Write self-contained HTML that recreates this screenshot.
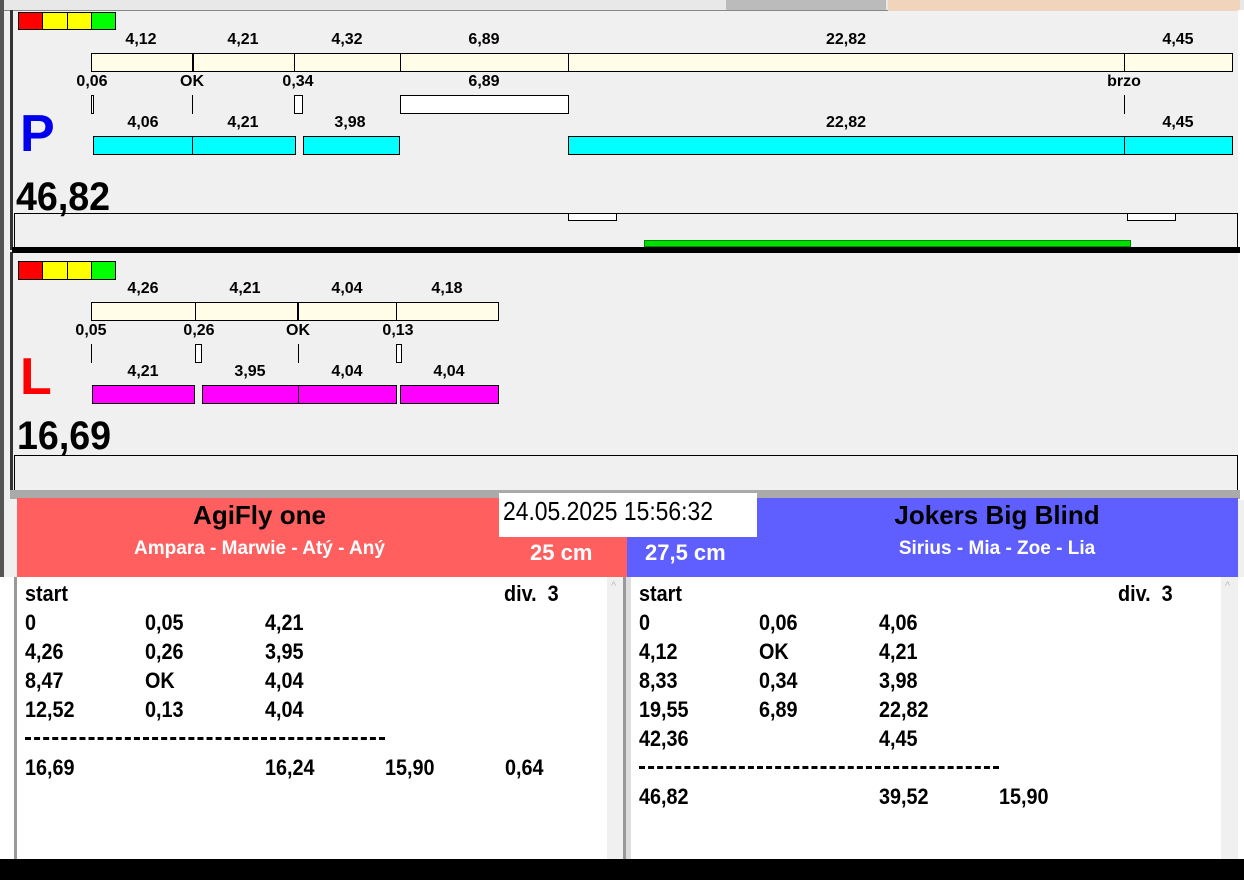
<!DOCTYPE html>
<html><head><meta charset="utf-8"><style>
*{margin:0;padding:0;box-sizing:border-box}
body{width:1244px;height:880px;overflow:hidden;background:#f0f0f0;position:relative;font-family:"Liberation Sans",Arial,sans-serif;font-weight:bold;color:#000}
div{position:absolute}
.b{border:1px solid #000}
.t{width:100px;text-align:center;font-size:16px;line-height:18px}
.cr{background:#fffde8}
.cy{background:#00ffff}
.mg{background:#ff00ff}
.w{background:#fff}
.vl{width:1px;background:#000}
.row{font-size:22px;line-height:29px;white-space:pre;transform:scaleX(.9);transform-origin:left}
</style></head><body>
<div style="left:0;top:0;width:1244px;height:11px;background:#e8e8e8;border-bottom:1px solid #888"></div>
<div style="left:726px;top:0;width:160px;height:10px;background:#bbb"></div>
<div style="left:888px;top:0;width:352px;height:11px;background:#f0d4bc"></div>
<div style="left:0;top:0;width:4px;height:580px;background:#555"></div>
<div style="left:10px;top:10px;width:3px;height:240px;background:#333"></div>
<div style="left:10px;top:252px;width:3px;height:240px;background:#333"></div>
<div style="left:1238px;top:10px;width:6px;height:490px;background:#fff"></div>

<div class="b" style="left:18px;top:12px;width:98px;height:18px;display:flex;position:absolute"><span style="flex:1;background:#f00;border-right:1px solid #000"></span><span style="flex:1;background:#ff0;border-right:1px solid #000"></span><span style="flex:1;background:#ff0;border-right:1px solid #000"></span><span style="flex:1;background:#0f0"></span></div>

<div class="t" style="left:91px;top:31px">4,12</div>
<div class="t" style="left:193px;top:31px">4,21</div>
<div class="t" style="left:297px;top:31px">4,32</div>
<div class="t" style="left:434px;top:31px">6,89</div>
<div class="t" style="left:796px;top:31px">22,82</div>
<div class="t" style="left:1128px;top:31px">4,45</div>
<div class="b cr" style="left:91px;top:53px;width:1142px;height:19px"></div>
<div class="vl" style="left:192px;top:53px;height:19px;width:2px"></div>
<div class="vl" style="left:294px;top:53px;height:19px"></div>
<div class="vl" style="left:400px;top:53px;height:19px"></div>
<div class="vl" style="left:568px;top:53px;height:19px"></div>
<div class="vl" style="left:1124px;top:53px;height:19px"></div>
<div class="t" style="left:42px;top:73px">0,06</div>
<div class="t" style="left:142px;top:73px">OK</div>
<div class="t" style="left:248px;top:73px">0,34</div>
<div class="t" style="left:434px;top:73px">6,89</div>
<div class="t" style="left:1074px;top:73px">brzo</div>
<div class="b w" style="left:91px;top:95px;width:3px;height:19px"></div>
<div class="vl" style="left:192px;top:95px;height:19px"></div>
<div class="b w" style="left:294px;top:95px;width:9px;height:19px"></div>
<div class="b w" style="left:400px;top:95px;width:169px;height:19px"></div>
<div class="vl" style="left:1124px;top:95px;height:19px"></div>
<div class="t" style="left:93px;top:114px">4,06</div>
<div class="t" style="left:193px;top:114px">4,21</div>
<div class="t" style="left:300px;top:114px">3,98</div>
<div class="t" style="left:796px;top:114px">22,82</div>
<div class="t" style="left:1128px;top:114px">4,45</div>
<div class="b cy" style="left:93px;top:136px;width:203px;height:19px"></div>
<div class="vl" style="left:192px;top:136px;height:19px"></div>
<div class="b cy" style="left:303px;top:136px;width:97px;height:19px"></div>
<div class="b cy" style="left:568px;top:136px;width:665px;height:19px"></div>
<div class="vl" style="left:1124px;top:136px;height:19px"></div>
<div style="left:20px;top:106px;font-size:52px;line-height:56px;color:#0000ee">P</div>
<div style="left:16px;top:175px;font-size:40px;line-height:44px;transform:scaleX(.94);transform-origin:left">46,82</div>
<div style="left:14px;top:213px;width:1224px;height:35px;border-top:1px solid #000;border-left:1px solid #000;border-right:1px solid #000"></div>
<div class="b w" style="left:568px;top:213px;width:49px;height:8px"></div>
<div class="b w" style="left:1127px;top:213px;width:49px;height:8px"></div>
<div style="left:644px;top:240px;width:487px;height:7px;background:#00e000;border:1px solid #080"></div>
<div style="left:12px;top:247px;width:1228px;height:6px;background:#000"></div>

<div class="b" style="left:18px;top:261px;width:98px;height:19px;display:flex;position:absolute"><span style="flex:1;background:#f00;border-right:1px solid #000"></span><span style="flex:1;background:#ff0;border-right:1px solid #000"></span><span style="flex:1;background:#ff0;border-right:1px solid #000"></span><span style="flex:1;background:#0f0"></span></div>
<div class="t" style="left:93px;top:280px">4,26</div>
<div class="t" style="left:195px;top:280px">4,21</div>
<div class="t" style="left:297px;top:280px">4,04</div>
<div class="t" style="left:397px;top:280px">4,18</div>
<div class="b cr" style="left:91px;top:302px;width:408px;height:19px"></div>
<div class="vl" style="left:195px;top:302px;height:19px"></div>
<div class="vl" style="left:297px;top:302px;height:19px;width:2px"></div>
<div class="vl" style="left:396px;top:302px;height:19px"></div>
<div class="t" style="left:41px;top:322px">0,05</div>
<div class="t" style="left:149px;top:322px">0,26</div>
<div class="t" style="left:248px;top:322px">OK</div>
<div class="t" style="left:348px;top:322px">0,13</div>
<div class="vl" style="left:91px;top:344px;height:19px"></div>
<div class="b w" style="left:195px;top:344px;width:7px;height:19px"></div>
<div class="vl" style="left:298px;top:344px;height:19px"></div>
<div class="b w" style="left:396px;top:344px;width:6px;height:19px"></div>
<div class="t" style="left:93px;top:363px">4,21</div>
<div class="t" style="left:200px;top:363px">3,95</div>
<div class="t" style="left:297px;top:363px">4,04</div>
<div class="t" style="left:399px;top:363px">4,04</div>
<div class="b mg" style="left:92px;top:385px;width:103px;height:19px"></div>
<div class="b mg" style="left:202px;top:385px;width:195px;height:19px"></div>
<div class="vl" style="left:298px;top:385px;height:19px"></div>
<div class="b mg" style="left:400px;top:385px;width:99px;height:19px"></div>
<div style="left:20px;top:349px;font-size:52px;line-height:56px;color:#f00">L</div>
<div style="left:17px;top:414px;font-size:40px;line-height:44px;transform:scaleX(.94);transform-origin:left">16,69</div>
<div style="left:14px;top:455px;width:1224px;height:36px;border-top:1px solid #000;border-left:1px solid #000;border-right:1px solid #000"></div>
<div style="left:10px;top:490px;width:1230px;height:9px;background:#aaa"></div>

<div style="left:17px;top:498px;width:610px;height:79px;background:#ff5f5f"></div>
<div style="left:627px;top:498px;width:611px;height:79px;background:#5f5fff"></div>
<div style="left:17px;top:500px;width:485px;text-align:center;font-size:26px;line-height:30px">AgiFly one</div>
<div style="left:17px;top:538px;width:485px;text-align:center;font-size:19px;line-height:22px;color:#fff">Ampara - Marwie - Atý - Aný</div>
<div style="left:530px;top:540px;font-size:22px;line-height:26px;color:#fff">25 cm</div>
<div style="left:645px;top:540px;font-size:22px;line-height:26px;color:#fff">27,5 cm</div>
<div style="left:756px;top:500px;width:482px;text-align:center;font-size:26px;line-height:30px">Jokers Big Blind</div>
<div style="left:756px;top:538px;width:482px;text-align:center;font-size:19px;line-height:22px;color:#fff">Sirius - Mia - Zoe - Lia</div>
<div style="left:499px;top:493px;width:258px;height:44px;background:#fff"></div>
<div style="left:503px;top:493px;font-weight:normal;font-size:26px;line-height:36px;white-space:nowrap;transform:scaleX(.88);transform-origin:left">24.05.2025 15:56:32</div>

<div style="left:0;top:577px;width:15px;height:282px;background:#fff"></div>
<div style="left:14px;top:577px;width:3px;height:282px;background:#999"></div>
<div style="left:17px;top:577px;width:590px;height:282px;background:#fff"></div>
<div style="left:607px;top:577px;width:16px;height:282px;background:#f0f0f0"></div>
<div style="left:623px;top:577px;width:8px;height:282px;background:#ddd;border-left:3px solid #999"></div>
<div style="left:631px;top:577px;width:590px;height:282px;background:#fff"></div>
<div style="left:1221px;top:577px;width:17px;height:282px;background:#f0f0f0"></div>
<div style="left:1238px;top:577px;width:6px;height:282px;background:#fff"></div>
<div style="left:611px;top:580px;font-size:11px;color:#bbb;font-weight:normal">^</div>
<div style="left:1225px;top:580px;font-size:11px;color:#bbb;font-weight:normal">^</div>

<div class="row" style="left:25px;top:579px">start</div>
<div class="row" style="left:504px;top:579px">div.  3</div>
<div class="row" style="left:25px;top:608px">0</div><div class="row" style="left:145px;top:608px">0,05</div><div class="row" style="left:265px;top:608px">4,21</div>
<div class="row" style="left:25px;top:637px">4,26</div><div class="row" style="left:145px;top:637px">0,26</div><div class="row" style="left:265px;top:637px">3,95</div>
<div class="row" style="left:25px;top:666px">8,47</div><div class="row" style="left:145px;top:666px">OK</div><div class="row" style="left:265px;top:666px">4,04</div>
<div class="row" style="left:25px;top:695px">12,52</div><div class="row" style="left:145px;top:695px">0,13</div><div class="row" style="left:265px;top:695px">4,04</div>
<div style="left:25px;top:737px;width:360px;height:3px;border-top:3px dashed #000"></div>
<div class="row" style="left:25px;top:753px">16,69</div><div class="row" style="left:265px;top:753px">16,24</div><div class="row" style="left:385px;top:753px">15,90</div><div class="row" style="left:505px;top:753px">0,64</div>

<div class="row" style="left:639px;top:579px">start</div>
<div class="row" style="left:1118px;top:579px">div.  3</div>
<div class="row" style="left:639px;top:608px">0</div><div class="row" style="left:759px;top:608px">0,06</div><div class="row" style="left:879px;top:608px">4,06</div>
<div class="row" style="left:639px;top:637px">4,12</div><div class="row" style="left:759px;top:637px">OK</div><div class="row" style="left:879px;top:637px">4,21</div>
<div class="row" style="left:639px;top:666px">8,33</div><div class="row" style="left:759px;top:666px">0,34</div><div class="row" style="left:879px;top:666px">3,98</div>
<div class="row" style="left:639px;top:695px">19,55</div><div class="row" style="left:759px;top:695px">6,89</div><div class="row" style="left:879px;top:695px">22,82</div>
<div class="row" style="left:639px;top:724px">42,36</div><div class="row" style="left:879px;top:724px">4,45</div>
<div style="left:639px;top:766px;width:360px;height:3px;border-top:3px dashed #000"></div>
<div class="row" style="left:639px;top:782px">46,82</div><div class="row" style="left:879px;top:782px">39,52</div><div class="row" style="left:999px;top:782px">15,90</div>

<div style="left:0;top:859px;width:1244px;height:21px;background:#000"></div>
</body></html>
